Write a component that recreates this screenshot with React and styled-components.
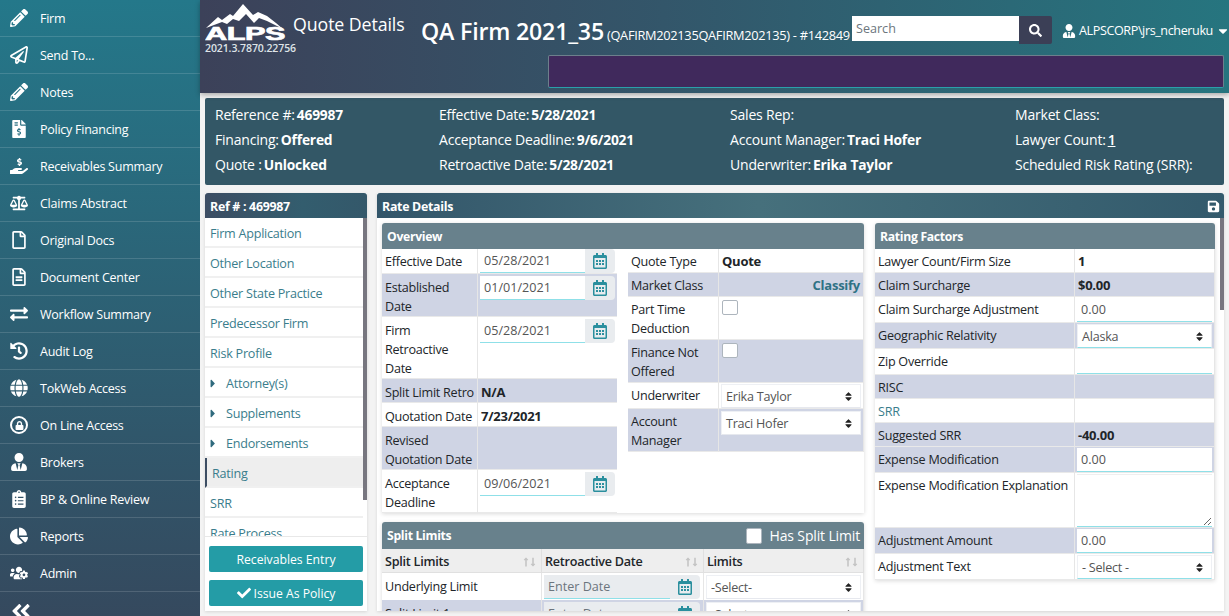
import React from 'react';
import styled, { createGlobalStyle } from 'styled-components';
import {
  FaPencilAlt, FaRegPaperPlane, FaFileInvoiceDollar, FaHandHoldingUsd, FaBalanceScale, FaRegFile,
  FaRegFileAlt, FaExchangeAlt, FaHistory, FaGlobe, FaLock, FaUserTie, FaClipboardList, FaChartPie,
  FaUsersCog, FaAngleDoubleLeft, FaSearch, FaSave, FaCheck, FaRegCalendarAlt, FaSort, FaCaretRight,
  FaCaretDown, FaLongArrowAltUp, FaLongArrowAltDown,
} from 'react-icons/fa';

const GlobalStyle = createGlobalStyle`
  html, body {
    margin: 0;
    height: 616px;
    overflow: hidden;
    background: #f3f3f3;
    font-family: "Open Sans", "Noto Sans", sans-serif;
    font-size: 12.6px;
    letter-spacing: -0.25px;
    color: #212529;
  }
  * { box-sizing: border-box; }
`;

const Page = styled.div`
  display: flex;
  width: 1229px;
  height: 616px;
  overflow: hidden;
`;

const Sidebar = styled.nav`
  width: 200px;
  flex: none;
  display: flex;
  flex-direction: column;
  background: linear-gradient(180deg, #24788a 0%, #35495e 100%);
`;

const SideItem = styled.div`
  height: 37px;
  flex: none;
  display: flex;
  align-items: center;
  padding-left: 10px;
  color: #fff;
  font-size: 12.5px;
  border-bottom: 1px solid rgba(255, 255, 255, 0.14);
`;

const SideIcon = styled.span`
  width: 30px;
  flex: none;
  display: flex;
  align-items: center;
  > svg { height: 18px; width: auto; }
`;

const LockRing = styled.span`
  width: 18px;
  height: 18px;
  border-radius: 50%;
  border: 2px solid #fff;
  display: flex;
  align-items: center;
  justify-content: center;
  svg { font-size: 9px; }
`;

const Collapse = styled.div`
  flex: 1;
  display: flex;
  align-items: center;
  padding: 8px 0 0 10px;
  color: #fff;
  svg { font-size: 22px; }
`;

const Main = styled.div`
  flex: 1;
  min-width: 0;
  display: flex;
  flex-direction: column;
`;

const Header = styled.header`
  height: 93px;
  flex: none;
  display: flex;
  padding: 4px 5px 5px 5px;
  color: #fff;
  background: linear-gradient(90deg, #3c4159 0%, #33566a 45%, #26757f 100%);
  box-shadow: 0 2px 5px rgba(0, 0, 0, 0.3);
  position: relative;
`;

const LogoBlock = styled.div`
  width: 88px;
  flex: none;
  svg { display: block; }
`;

const Version = styled.div`
  font-size: 10.5px;
  line-height: 12px;
  font-weight: 600;
  color: #dfe4e8;
  letter-spacing: -0.1px;
  white-space: nowrap;
`;

const HeadRight = styled.div`
  flex: 1;
  min-width: 0;
  display: flex;
  flex-direction: column;
  align-items: flex-end;
`;

const HeadTop = styled.div`
  width: 100%;
  height: 52px;
  display: flex;
  align-items: flex-start;
  white-space: nowrap;
  > * { flex: none; }
`;

const PageTitle = styled.div`
  margin: 8px 0 0 0;
  width: 128px;
  font-size: 17.8px;
  line-height: 24px;
  font-weight: 400;
  letter-spacing: -0.1px;
`;

const FirmName = styled.div`
  width: 431px;
  margin-top: 11px;
  font-size: 23.2px;
  line-height: 32px;
  font-weight: 600;
  letter-spacing: -0.2px;
  small {
    font-size: 12.8px;
    font-weight: 400;
    letter-spacing: -0.3px;
    margin-left: 3px;
  }
`;

const SearchInput = styled.input`
  width: 167px;
  height: 25px;
  margin-top: 12px;
  border: 0;
  padding: 0 4px;
  font: inherit;
  font-size: 12.6px;
  background: #fff;
  &::placeholder { color: #6c757d; }
`;

const SearchButton = styled.button`
  width: 33px;
  height: 28px;
  margin-top: 12px;
  border: 0;
  border-radius: 0 2px 2px 0;
  background: #3b3f56;
  color: #fff;
  display: flex;
  align-items: center;
  justify-content: center;
  svg { font-size: 13px; }
`;

const UserMenu = styled.div`
  margin: 18px 0 0 10px;
  display: flex;
  align-items: center;
  gap: 3px;
  font-size: 12.6px;
  line-height: 18px;
  white-space: nowrap;
  letter-spacing: -0.4px;
  svg { height: 14px; width: auto; flex: none; }
`;

const NoticeBar = styled.div`
  width: 676px;
  height: 33px;
  background: #40295c;
  border: 1px solid #6d7f8c;
  border-bottom: 1px solid #2aa0aa;
  border-radius: 2px;
`;

const Summary = styled.section`
  height: 87px;
  flex: none;
  margin: 5px 5px 0;
  padding: 4px 10px;
  display: grid;
  grid-template-columns: 224px 291px 285px 1fr;
  grid-auto-rows: 25px;
  align-items: center;
  background: #335766;
  border-radius: 2px;
  color: #fff;
  font-size: 14px;
  letter-spacing: -0.2px;
  white-space: nowrap;
  b { font-weight: 700; font-size: 13.8px; margin-left: 2px; }
  u { font-weight: 600; margin-left: 2px; }
`;

const Content = styled.div`
  flex: 1;
  min-height: 0;
  display: flex;
  gap: 10px;
  margin: 8px 5px 5px;
`;

const NavPanel = styled.aside`
  width: 162px;
  flex: none;
  display: flex;
  flex-direction: column;
  background: #fff;
  box-shadow: 0 1px 3px rgba(0, 0, 0, 0.12);
`;

const PanelTitle = styled.div`
  height: 25px;
  flex: none;
  display: flex;
  align-items: center;
  justify-content: space-between;
  padding: 1px 4px 0 5px;
  color: #fff;
  font-size: 12.4px;
  font-weight: 700;
  letter-spacing: -0.3px;
  border-radius: 3px 3px 0 0;
  background: linear-gradient(90deg, #3c4d63 0%, #335d6e 60%, #34586a 100%);
  svg { font-size: 13px; }
`;

const NavScroll = styled.div`
  height: 318px;
  flex: none;
  overflow: hidden;
  position: relative;
`;

const Thumb = styled.div`
  position: absolute;
  top: 0;
  right: 0;
  width: 4px;
  height: ${(p) => p.$height}px;
  background: #77767f;
`;

const NavRow = styled.div`
  height: 30px;
  display: flex;
  align-items: center;
  color: #3a7d8c;
  padding: 2px 0 0 5px;
  margin-right: 4px;
  background: ${(p) => (p.$active ? '#eeeeee' : '#fff')};
  border-left: ${(p) => (p.$active ? '2px solid #3c4d63' : '0')};
  border-bottom: 2px solid #f0f0f0;
  svg { width: 6px; height: 13px; color: #2f6a7d; margin-right: 10px; }
`;

const NavActions = styled.div`
  flex: 1;
  display: flex;
  flex-direction: column;
  gap: 8px;
  padding: 9px 4px 0;
  border-top: 1px solid #e8e8e8;
`;

const ActionButton = styled.button`
  height: 26px;
  border: 0;
  border-radius: 2px;
  background: #249ca6;
  color: #fff;
  font: inherit;
  font-size: 12.2px;
  display: flex;
  align-items: center;
  justify-content: center;
  gap: 3px;
  svg { font-size: 14px; }
`;

const RatePanel = styled.section`
  flex: 1;
  min-width: 0;
  display: flex;
  flex-direction: column;
  background: #fff;
  box-shadow: 0 1px 3px rgba(0, 0, 0, 0.12);
`;

const RateTitle = styled(PanelTitle)`
  background: linear-gradient(90deg, #33566a 0%, #46707c 45%, #335a6c 100%);
`;

const RateBody = styled.div`
  flex: 1;
  min-height: 0;
  position: relative;
  overflow: hidden;
  display: flex;
  align-items: flex-start;
  gap: 11px;
  padding: 5px 9px 0 5px;
`;

const Column = styled.div`
  width: ${(p) => p.$width}px;
  flex: none;
  display: flex;
  flex-direction: column;
  gap: 9px;
`;

const Card = styled.div`
  background: #fff;
  border-radius: 3px 3px 0 0;
  box-shadow: 0 1px 4px rgba(0, 0, 0, 0.15);
`;

const CardTitle = styled.div`
  height: ${(p) => p.$height || 26}px;
  display: flex;
  align-items: center;
  justify-content: space-between;
  padding: 0 4px 0 5px;
  background: #68818c;
  color: #fff;
  font-weight: 700;
  font-size: 12.2px;
  letter-spacing: -0.3px;
  border-radius: 3px 3px 0 0;
`;

const HasLimit = styled.label`
  display: flex;
  align-items: center;
  gap: 8px;
  font-weight: 400;
  font-size: 14px;
  letter-spacing: -0.15px;
`;

const TwoTables = styled.div`
  display: flex;
  gap: 11px;
  align-items: flex-start;
`;

const Table = styled.div`
  width: ${(p) => p.$width}px;
  flex: none;
  display: grid;
  grid-template-columns: ${(p) => p.$cols};
  border-right: 1px solid #e6e6e6;
`;

const Label = styled.div`
  padding: ${(p) => (p.$low ? '4px 0 0 3px' : '3px 0 1px 3px')};
  line-height: 19px;
  background: ${(p) => (p.$shade ? '#cfd4e4' : '#fff')};
  color: ${(p) => (p.$link ? '#3a7d8c' : '#212529')};
  border-right: 1px solid #e6e6e6;
  border-bottom: 1px solid #e9e9e9;
`;

// top row inputs sit against the card title, the ones below get a bit of air
const inputPadding = { top: '0 2px', pad: '1px 2px 0', low: '2px 2px 0' };

const Value = styled.div`
  padding: ${(p) => inputPadding[p.$input] || (p.$low ? '4px 3px 0' : '3px 3px 1px')};
  line-height: 19px;
  font-size: ${(p) => (p.$bold ? '13px' : 'inherit')};
  font-weight: ${(p) => (p.$bold ? 700 : 400)};
  text-align: ${(p) => (p.$right ? 'right' : 'left')};
  color: ${(p) => (p.$link ? '#2f7285' : '#212529')};
  background: ${(p) => (p.$shade ? '#cfd4e4' : '#fff')};
  border-bottom: 1px solid #e9e9e9;
`;

const TextInput = styled.input`
  display: block;
  width: 100%;
  min-width: 0;
  height: 24px;
  border: 0;
  border-bottom: 1px solid #8fe0e8;
  padding: 0 4px;
  font: inherit;
  color: #555;
  background: ${(p) => (p.$disabled ? '#e9ecef' : '#fff')};
  &::placeholder { color: #6c757d; }
`;

const DateField = styled.div`
  display: grid;
  grid-template-columns: 1fr 30px;
  width: ${(p) => p.$width}px;
`;

const CalendarAddon = styled.span`
  height: 24px;
  display: flex;
  align-items: center;
  justify-content: center;
  background: #e9ecef;
  border-radius: 0 4px 4px 0;
  color: #2a8f9e;
  svg { font-size: 16px; }
`;

const SelectBox = styled.div`
  height: 24px;
  display: flex;
  align-items: center;
  justify-content: space-between;
  padding: 0 6px 0 4px;
  background: #fff;
  color: #555;
  border: 1px solid #eef0f4;
  border-bottom: 1px solid ${(p) => (p.$teal ? '#8fe0e8' : '#e6e8ee')};
  svg { font-size: 11px; color: #222; }
`;

const Check = styled.input.attrs({ type: 'checkbox' })`
  appearance: none;
  display: block;
  margin: ${(p) => p.$margin || '0'};
  width: 16px;
  height: ${(p) => p.$height || 16}px;
  background: #fff;
  border: 1px solid #adb5bd;
  border-radius: 2px;
`;

const Note = styled.textarea`
  display: block;
  width: 100%;
  height: 53px;
  margin: 0;
  border: 0;
  border-bottom: 1px solid #8fe0e8;
  border-top: 1px solid #efefef;
  padding: 0 4px;
  font: inherit;
  background: #fff;
`;

const SplitHead = styled.div`
  display: flex;
  align-items: center;
  justify-content: space-between;
  height: 24px;
  padding: 2px 3px 0;
  background: #eeeeee;
  font-weight: 600;
  border-right: 1px solid #e0e0e0;
  border-bottom: 1px solid #e0e0e0;
`;

const SortMark = styled.span`
  display: flex;
  color: #c4c4c4;
  svg { font-size: 10px; margin-left: -3px; }
`;

const SplitCell = styled.div`
  height: 27px;
  padding: ${(p) => (p.$label ? '4px 3px' : '2px 2px 0')};
  line-height: 19px;
  background: ${(p) => (p.$shade ? '#cfd4e4' : '#fff')};
  border-right: 1px solid #e6e6e6;
`;

const menu = [
  ['Firm', <FaPencilAlt />],
  ['Send To...', <FaRegPaperPlane />],
  ['Notes', <FaPencilAlt />],
  ['Policy Financing', <FaFileInvoiceDollar />],
  ['Receivables Summary', <FaHandHoldingUsd />],
  ['Claims Abstract', <FaBalanceScale />],
  ['Original Docs', <FaRegFile />],
  ['Document Center', <FaRegFileAlt />],
  ['Workflow Summary', <FaExchangeAlt />],
  ['Audit Log', <FaHistory />],
  ['TokWeb Access', <FaGlobe />],
  ['On Line Access', <LockRing><FaLock /></LockRing>],
  ['Brokers', <FaUserTie />],
  ['BP & Online Review', <FaClipboardList />],
  ['Reports', <FaChartPie />],
  ['Admin', <FaUsersCog />],
];

const navRows = [
  ['Firm Application'], ['Other Location'], ['Other State Practice'], ['Predecessor Firm'], ['Risk Profile'],
  ['Attorney(s)', 'sub'], ['Supplements', 'sub'], ['Endorsements', 'sub'], ['Rating', 'active'], ['SRR'], ['Rate Process'],
];

const summary = [
  ['Reference #:', '469987'], ['Effective Date:', '5/28/2021'], ['Sales Rep:', ''], ['Market Class:', ''],
  ['Financing:', 'Offered'], ['Acceptance Deadline:', '9/6/2021'], ['Account Manager:', 'Traci Hofer'], ['Lawyer Count:', '1', 'u'],
  ['Quote :', 'Unlocked'], ['Retroactive Date:', '5/28/2021'], ['Underwriter:', 'Erika Taylor'], ['Scheduled Risk Rating (SRR):', ''],
];

const DateInput = ({ value, placeholder, disabled, width = 135 }) => (
  <DateField $width={width}>
    <TextInput readOnly value={value} placeholder={placeholder} $disabled={disabled} />
    <CalendarAddon><FaRegCalendarAlt /></CalendarAddon>
  </DateField>
);

const Select = ({ children, teal }) => (
  <SelectBox $teal={teal}>
    {children}
    <FaSort />
  </SelectBox>
);

const overviewLeft = [
  ['Effective Date', <DateInput value="05/28/2021" />, { input: 'top' }],
  ['Established Date', <DateInput value="01/01/2021" />, { input: 'low' }],
  [<>Firm<br />Retroactive<br />Date</>, <DateInput value="05/28/2021" />, { input: 'low' }],
  ['Split Limit Retro', 'N/A', { bold: true }],
  ['Quotation Date', '7/23/2021', { bold: true }],
  ['Revised Quotation Date', ''],
  ['Acceptance Deadline', <DateInput value="09/06/2021" />, { input: 'low' }],
];

const overviewRight = [
  ['Quote Type', 'Quote', { bold: true }],
  ['Market Class', 'Classify', { bold: true, right: true, link: true }],
  ['Part Time Deduction', <Check $margin="1px 0 0 1px" $height={15} />, { input: 'low' }],
  ['Finance Not Offered', <Check $margin="1px 0 0 1px" $height={15} />, { input: 'low' }],
  ['Underwriter', <Select>Erika Taylor</Select>, { input: 'pad' }],
  ['Account Manager', <Select>Traci Hofer</Select>, { input: 'low' }],
];

const ratingRows = [
  ['Lawyer Count/Firm Size', '1', { bold: true }],
  ['Claim Surcharge', '$0.00', { bold: true }],
  ['Claim Surcharge Adjustment', <TextInput readOnly value="0.00" />, { input: 'pad' }],
  ['Geographic Relativity', <Select teal>Alaska</Select>, { input: 'pad' }],
  ['Zip Override', <TextInput readOnly value="" />, { input: 'pad' }],
  ['RISC', ''],
  ['SRR', '', { labelLink: true }],
  ['Suggested SRR', '-40.00', { bold: true }],
  ['Expense Modification', <TextInput readOnly value="0.00" />, { input: 'pad', shade: true }],
  ['Expense Modification Explanation', <Note readOnly />, { input: 'pad', shade: false }],
  ['Adjustment Amount', <TextInput readOnly value="0.00" />, { input: 'pad', shade: true }],
  ['Adjustment Text', <Select teal>- Select -</Select>, { input: 'pad', shade: false }],
];

const FormRows = ({ rows, low }) =>
  rows.map(([label, value, opts = {}], i) => {
    const shade = opts.shade ?? i % 2 === 1;
    const lowered = low && i > 0;
    return (
      <React.Fragment key={i}>
        <Label $shade={shade} $link={opts.labelLink} $low={lowered}>{label}</Label>
        <Value $shade={shade} $low={lowered} $input={opts.input} $bold={opts.bold} $right={opts.right} $link={opts.link}>
          {value}
        </Value>
      </React.Fragment>
    );
  });

const SortIcon = () => (
  <SortMark>
    <FaLongArrowAltUp />
    <FaLongArrowAltDown />
  </SortMark>
);

export default function App() {
  return (
    <Page>
      <GlobalStyle />
      <Sidebar>
        {menu.map(([label, icon]) => (
          <SideItem key={label}>
            <SideIcon>{icon}</SideIcon>
            {label}
          </SideItem>
        ))}
        <Collapse><FaAngleDoubleLeft /></Collapse>
      </Sidebar>
      <Main>
        <Header>
          <LogoBlock>
            <svg width="82" height="38" viewBox="0 0 82 38">
              <path
                fill="#fff"
                d="M1 24 L13 13 L17 16 L25 10 L28 12 L38 0 L48 11 L53 8 L62 12 L71 19 L78 25 L62 17 L54 14 L49 19 L41 10 L34 17 L28 15 L22 20 L17 18 Z"
              />
              <text x="0" y="36" fill="#fff" stroke="#fff" strokeWidth="0.7" fontFamily="Liberation Sans" fontWeight="700" fontSize="18" textLength="80" lengthAdjust="spacingAndGlyphs">
                ALPS
              </text>
            </svg>
            <Version>2021.3.7870.22756</Version>
          </LogoBlock>
          <HeadRight>
            <HeadTop>
              <PageTitle>Quote Details</PageTitle>
              <FirmName>
                QA Firm 2021_35<small>(QAFIRM202135QAFIRM202135) - #142849</small>
              </FirmName>
              <SearchInput placeholder="Search" />
              <SearchButton><FaSearch /></SearchButton>
              <UserMenu>
                <FaUserTie />
                ALPSCORP\jrs_ncheruku
                <FaCaretDown />
              </UserMenu>
            </HeadTop>
            <NoticeBar />
          </HeadRight>
        </Header>

        <Summary>
          {summary.map(([label, value, kind]) => (
            <div key={label}>
              {label}
              {kind === 'u' ? <u>{value}</u> : value && <b>{value}</b>}
            </div>
          ))}
        </Summary>

        <Content>
          <NavPanel>
            <PanelTitle>Ref # : 469987</PanelTitle>
            <NavScroll>
              {navRows.map(([label, kind]) => (
                <NavRow key={label} $active={kind === 'active'}>
                  {kind === 'sub' && <FaCaretRight />}
                  {label}
                </NavRow>
              ))}
              <Thumb $height={282} />
            </NavScroll>
            <NavActions>
              <ActionButton>Receivables Entry</ActionButton>
              <ActionButton><FaCheck />Issue As Policy</ActionButton>
            </NavActions>
          </NavPanel>

          <RatePanel>
            <RateTitle>Rate Details<FaSave /></RateTitle>
            <RateBody>
              <Column $width={482}>
                <Card>
                  <CardTitle>Overview</CardTitle>
                  <TwoTables>
                    <Table $width={235} $cols="96px 1fr">
                      <FormRows rows={overviewLeft} low />
                    </Table>
                    <Table $width={236} $cols="91px 1fr">
                      <FormRows rows={overviewRight} />
                    </Table>
                  </TwoTables>
                </Card>
                <Card>
                  <CardTitle $height={27}>
                    Split Limits
                    <HasLimit><Check />Has Split Limit</HasLimit>
                  </CardTitle>
                  <Table $width={482} $cols="160px 162px 160px">
                    <SplitHead>Split Limits<SortIcon /></SplitHead>
                    <SplitHead>Retroactive Date<SortIcon /></SplitHead>
                    <SplitHead>Limits<SortIcon /></SplitHead>
                    <SplitCell $label>Underlying Limit</SplitCell>
                    <SplitCell><DateInput width={156} placeholder="Enter Date" disabled /></SplitCell>
                    <SplitCell><Select>-Select-</Select></SplitCell>
                    <SplitCell $label $shade>Split Limit 1</SplitCell>
                    <SplitCell $shade><DateInput width={156} placeholder="Enter Date" disabled /></SplitCell>
                    <SplitCell $shade><Select>-Select-</Select></SplitCell>
                  </Table>
                </Card>
              </Column>
              <Column $width={340}>
                <Card>
                  <CardTitle>Rating Factors</CardTitle>
                  <Table $width={340} $cols="200px 1fr">
                    <FormRows rows={ratingRows} />
                  </Table>
                </Card>
              </Column>
              <Thumb $height={92} />
            </RateBody>
          </RatePanel>
        </Content>
      </Main>
    </Page>
  );
}
